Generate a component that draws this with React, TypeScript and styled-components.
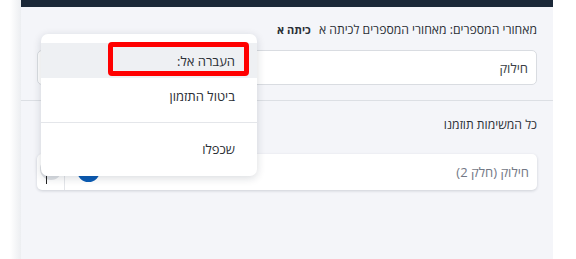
import React from "react";
import styled, { createGlobalStyle } from "styled-components";

const GlobalStyle = createGlobalStyle`
  html, body {
    margin: 0;
    padding: 0;
    background: #fff;
    font-family: "Open Sans", "Liberation Sans", sans-serif;
  }
`;

const Page = styled.div`
  display: flex;
  height: 259px;
  width: 576px;
  overflow: hidden;
  background: #fff;
`;

const SideRail = styled.div`
  width: 21px;
  flex: none;
  background: linear-gradient(to right, #fff 0, #fff 10px, #eceef1 21px);
`;

const Main = styled.div`
  position: relative;
  width: 532px;
  flex: none;
  background: #f4f5f9;
  display: flex;
  flex-direction: column;
`;

const TopBar = styled.div`
  height: 7px;
  background: #1b2838;
`;

const Section = styled.section<{ $top: number; $bottom: number }>`
  direction: rtl;
  padding: ${(p) => p.$top}px 16px ${(p) => p.$bottom}px;
  & + & {
    border-top: 1px solid #dcdfe4;
  }
`;

const Caption = styled.div<{ $gap: number }>`
  font-size: 12.2px;
  line-height: 18px;
  color: #2b2f36;
  margin-bottom: ${(p) => p.$gap}px;
  b {
    font-weight: 700;
    font-size: 11px;
    margin-right: 5px;
  }
`;

const Field = styled.div`
  height: 33px;
  background: #fff;
  border: 1px solid #d9dce1;
  border-radius: 5px;
  display: flex;
  align-items: center;
  padding: 0 8px;
  font-size: 13px;
  color: #3a3e45;
`;

const TaskCard = styled.div`
  height: 36px;
  background: #fff;
  border-radius: 5px;
  box-shadow: 0 1px 3px rgba(30, 40, 60, 0.18);
  display: flex;
  align-items: center;
  padding-right: 8px;
  font-size: 13px;
  color: #737885;
`;

const TaskTitle = styled.span`
  flex: 1;
`;

const Dot = styled.span`
  width: 23px;
  height: 23px;
  border-radius: 50%;
  background: #0b5cb5;
  margin-left: 12px;
  margin-bottom: 4px;
`;

const HandleCell = styled.div`
  align-self: stretch;
  width: 27px;
  border-right: 1px solid #e3e5e9;
  position: relative;
  display: flex;
  align-items: center;
  justify-content: center;
`;

const HandleBall = styled.span`
  width: 22px;
  height: 22px;
  border-radius: 50%;
  background: #dfe2e6;
  margin-bottom: 7px;
`;

const Caret = styled.span`
  position: absolute;
  left: 9px;
  top: 22px;
  width: 1px;
  height: 8px;
  background: #222;
`;

const Menu = styled.div`
  position: absolute;
  left: 20px;
  top: 34px;
  width: 216px;
  direction: rtl;
  background: #fff;
  border-radius: 7px;
  box-shadow: 0 2px 8px rgba(20, 30, 50, 0.16);
  padding: 9px 0 10px;
  font-size: 13px;
  color: #2b2f36;
`;

const MenuItem = styled.div<{ $active?: boolean }>`
  position: relative;
  height: 35px;
  display: flex;
  align-items: center;
  padding-right: 22px;
  background: ${(p) => (p.$active ? "#eef0f3" : "transparent")};
`;

const MenuDivider = styled.div`
  height: 1px;
  background: #e4e6ea;
  margin: 9px 0 8px;
`;

const Highlight = styled.span`
  position: absolute;
  right: 8px;
  top: -1px;
  width: 131px;
  height: 24px;
  border: 5px solid #ff0000;
  border-radius: 4px;
`;

export default function App() {
  return (
    <>
      <GlobalStyle />
      <Page>
        <SideRail />
        <Main>
          <TopBar />
          <Section $top={14} $bottom={15}>
            <Caption $gap={11}>
              מאחורי המספרים: מאחורי המספרים לכיתה א <b>כיתה א</b>
            </Caption>
            <Field>חילוק</Field>
          </Section>
          <Section $top={15} $bottom={0}>
            <Caption $gap={20}>כל המשימות תוזמנו</Caption>
            <TaskCard>
              <TaskTitle>חילוק (חלק 2)</TaskTitle>
              <Dot />
              <HandleCell>
                <HandleBall />
                <Caret />
              </HandleCell>
            </TaskCard>
          </Section>
          <Menu>
            <MenuItem $active>
              העברה אל:
              <Highlight />
            </MenuItem>
            <MenuItem>ביטול התזמון</MenuItem>
            <MenuDivider />
            <MenuItem>שכפלו</MenuItem>
          </Menu>
        </Main>
      </Page>
    </>
  );
}
